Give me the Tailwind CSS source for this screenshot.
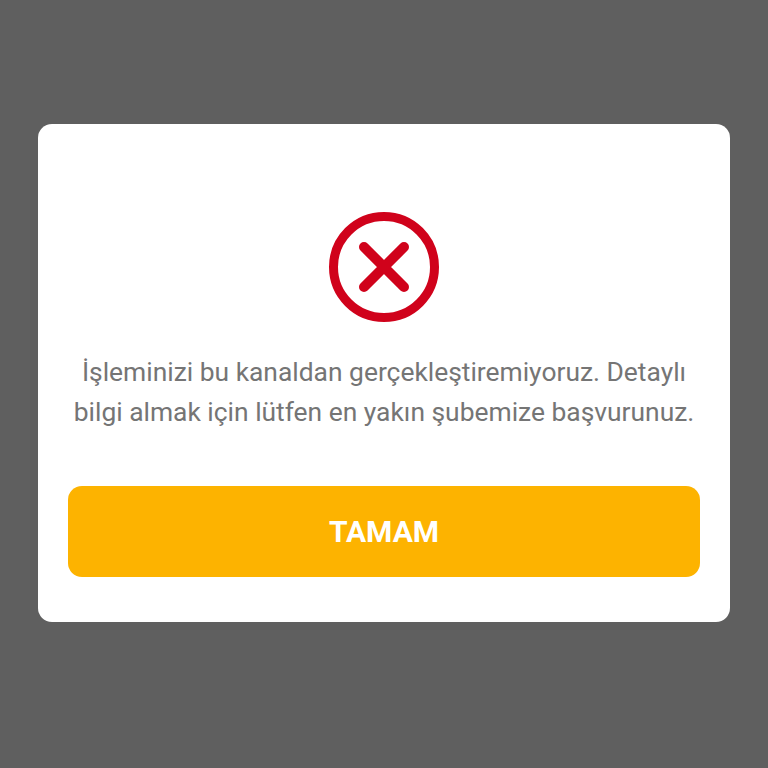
<!DOCTYPE html>
<html><head><meta charset="utf-8"><script src="https://cdn.jsdelivr.net/npm/@tailwindcss/browser@4"></script></head>
<body class="m-0">
<div class="w-[768px] h-[768px] bg-[#5f5f5f] flex flex-col pt-[124px] px-[38px] font-['Roboto',sans-serif]">
<div class="w-[692px] h-[498px] bg-white rounded-[14px] flex flex-col items-center pt-[88px] px-[30px]">
<svg width="110" height="110" viewBox="0 0 110 110" fill="none"><circle cx="55" cy="55" r="50.5" stroke="#d0021b" stroke-width="9"/><path d="M35 35L75 75M75 35L35 75" stroke="#d0021b" stroke-width="10" stroke-linecap="round"/></svg>
<p class="mt-[30px] text-center text-[#757575] text-[26.4px] leading-[40px] whitespace-nowrap">İşleminizi bu kanaldan gerçekleştiremiyoruz. Detaylı<br>bilgi almak için lütfen en yakın şubemize başvurunuz.</p>
<button class="mt-[54px] w-[632px] h-[91px] shrink-0 bg-[#fdb300] rounded-[14px] text-white font-bold text-[30px]">TAMAM</button>
</div>
</div>
</body></html>
